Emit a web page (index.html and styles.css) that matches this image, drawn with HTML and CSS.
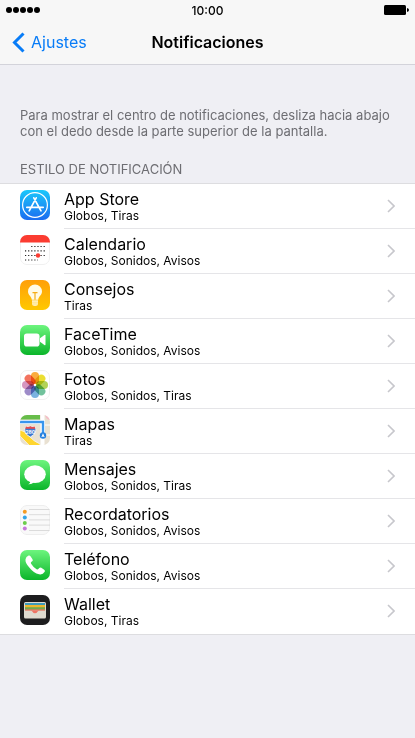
FILE: index.html
```html
<!DOCTYPE html>
<html lang="es">
  <head>
    <meta charset="UTF-8" />
    <meta name="viewport" content="width=device-width, initial-scale=1.0" />
    <title>Notificaciones</title>
    <link rel="stylesheet" href="styles.css">
  </head>
  <body>
    <header class="header">
      <div class="status-bar">
        <div class="signal"><i></i><i></i><i></i><i></i><i></i></div>
        <time class="clock">10:00</time>
        <svg class="battery" width="25" height="10" viewBox="0 0 25 10">
          <rect width="22" height="10" rx="1.5" />
          <path d="M23 3q2 .3 2 2t-2 2z" />
        </svg>
      </div>
      <nav class="nav-bar">
        <a class="back" href="#">
          <svg width="13" height="21" viewBox="0 0 13 21"><path d="M11.5 1.5 2.5 10.5l9 9" /></svg>
          Ajustes
        </a>
        <h1>Notificaciones</h1>
      </nav>
    </header>

    <main>
      <p class="intro">Para mostrar el centro de notificaciones, desliza hacia abajo con el dedo desde la parte superior de la pantalla.</p>
      <h2>ESTILO DE NOTIFICACIÓN</h2>

      <ul class="app-list">
        <li>
          <a class="app" href="#">
            <svg class="icon" viewBox="0 0 30 30">
              <defs>
                <linearGradient id="blue" x2="0" y2="1"><stop stop-color="#1bc8fb" /><stop offset="1" stop-color="#1b6cf0" /></linearGradient>
                <linearGradient id="green" x2="0" y2="1"><stop stop-color="#6df57e" /><stop offset="1" stop-color="#0bb52a" /></linearGradient>
                <linearGradient id="orange" x2="0" y2="1"><stop stop-color="#ff9f0a" /><stop offset="1" stop-color="#ffc800" /></linearGradient>
              </defs>
              <rect width="30" height="30" rx="7" fill="url(#blue)" />
              <g fill="none" stroke="#fff">
                <circle cx="15" cy="15" r="12.4" stroke-width="1.2" />
                <path d="M16.2 7.8 9.2 20.8M13.8 7.800l7.200 13M6.800 17.300h16.400" stroke-width="1.7" stroke-linecap="round" />
              </g>
            </svg>
            <span class="row">
              <span class="text"><span class="name">App Store</span><span class="styles">Globos, Tiras</span></span>
              <svg class="chevron" viewBox="0 0 8 14"><path d="M1 1l6 6-6 6" /></svg>
            </span>
          </a>
        </li>
        <li>
          <a class="app" href="#">
            <svg class="icon" viewBox="0 0 30 30">
              <rect x=".5" y=".5" width="29" height="29" rx="6.5" fill="#fff" stroke="#f0f0f0" />
              <path d="M0 7a7 7 0 0 1 7-7h16a7 7 0 0 1 7 7v.5H0z" fill="#fb3c31" />
              <g stroke="#222" stroke-width="1.2" stroke-dasharray="1.2 1.9">
                <path d="M11.2 11.500h14M5 15.800h20M5 20.500h20M5 25h13" />
              </g>
              <circle cx="18" cy="20.500" r="2.200" fill="#fb3c31" />
            </svg>
            <span class="row">
              <span class="text"><span class="name">Calendario</span><span class="styles">Globos, Sonidos, Avisos</span></span>
              <svg class="chevron" viewBox="0 0 8 14"><path d="M1 1l6 6-6 6" /></svg>
            </span>
          </a>
        </li>
        <li>
          <a class="app" href="#">
            <svg class="icon" viewBox="0 0 30 30">
              <rect width="30" height="30" rx="7" fill="url(#orange)" />
              <path d="M11.800 19.800C11.800 16.500 8 15.200 8 11.500a7 7 0 0 1 14 0c0 3.700-3.800 5-3.800 8.300z" fill="#fffbe8" />
              <path d="M12 20.300h6v3.500q0 2.200-3 2.200t-3-2.200z" fill="#fff0bd" />
              <path d="M12.500 12.700h5M15 12.700v7" fill="none" stroke="#f5ad17" stroke-width="1.200" />
              <path d="M12 22.300h6M12 24h6" stroke="#ffd95c" stroke-width=".5" />
            </svg>
            <span class="row">
              <span class="text"><span class="name">Consejos</span><span class="styles">Tiras</span></span>
              <svg class="chevron" viewBox="0 0 8 14"><path d="M1 1l6 6-6 6" /></svg>
            </span>
          </a>
        </li>
        <li>
          <a class="app" href="#">
            <svg class="icon" viewBox="0 0 30 30">
              <rect width="30" height="30" rx="7" fill="url(#green)" />
              <rect x="4" y="8.500" width="15.500" height="13" rx="2.800" fill="#fff" />
              <path d="M20 13.300 24.400 10q1.100-.7 1.100.5v9q0 1.200-1.100.5L20 16.700z" fill="#fff" />
            </svg>
            <span class="row">
              <span class="text"><span class="name">FaceTime</span><span class="styles">Globos, Sonidos, Avisos</span></span>
              <svg class="chevron" viewBox="0 0 8 14"><path d="M1 1l6 6-6 6" /></svg>
            </span>
          </a>
        </li>
        <li>
          <a class="app" href="#">
            <svg class="icon" viewBox="0 0 30 30">
              <rect x=".5" y=".5" width="29" height="29" rx="6.500" fill="#fff" stroke="#f0f0f0" />
              <g class="petals">
                <rect x="11" y="2" width="8" height="12" rx="4" fill="#f99d1c" />
                <rect x="11" y="2" width="8" height="12" rx="4" fill="#e8d80c" transform="rotate(45 15 15)" />
                <rect x="11" y="2" width="8" height="12" rx="4" fill="#a4ca39" transform="rotate(90 15 15)" />
                <rect x="11" y="2" width="8" height="12" rx="4" fill="#58b78b" transform="rotate(135 15 15)" />
                <rect x="11" y="2" width="8" height="12" rx="4" fill="#62a5db" transform="rotate(180 15 15)" />
                <rect x="11" y="2" width="8" height="12" rx="4" fill="#8c77bf" transform="rotate(225 15 15)" />
                <rect x="11" y="2" width="8" height="12" rx="4" fill="#cf83b4" transform="rotate(270 15 15)" />
                <rect x="11" y="2" width="8" height="12" rx="4" fill="#f05a43" transform="rotate(315 15 15)" />
              </g>
              <circle cx="15" cy="15" r="1" fill="#fff" />
            </svg>
            <span class="row">
              <span class="text"><span class="name">Fotos</span><span class="styles">Globos, Sonidos, Tiras</span></span>
              <svg class="chevron" viewBox="0 0 8 14"><path d="M1 1l6 6-6 6" /></svg>
            </span>
          </a>
        </li>
        <li>
          <a class="app" href="#">
            <svg class="icon" viewBox="0 0 30 30">
              <clipPath id="tile"><rect width="30" height="30" rx="7" /></clipPath>
              <g clip-path="url(#tile)">
                <rect width="30" height="30" fill="#e9e1d2" />
                <path d="M0 0h20v4.500H0z" fill="#67bd4a" />
                <path d="M25 0h5v5q-4-.5-5-5z" fill="#f5bcc8" />
                <path d="M20.500 0h4v30h-4z" fill="#fff" />
                <path d="M24.500 10h6M24.500 20h6" stroke="#fff" />
                <path d="M0 15q5 1 9 6t11 8v3h-9L0 21z" fill="#ffd52e" stroke="#fff" stroke-width=".6" />
                <path d="M0 7h23v13" fill="none" stroke="#fff" stroke-width="4" />
                <path d="M0 7h23v13" fill="none" stroke="#3995ed" stroke-width="2.400" />
                <circle cx="23" cy="20.500" r="3.200" fill="#2580df" />
                <path d="m23 18.300 1.700 4-1.700-.8-1.700.8z" fill="#fff" />
                <path d="M5.800 11.500q2.200 1 4.500-.3 2.300 1.300 4.500.3 3.500 6.500-4.500 10.500-8-4-4.500-10.500z" fill="#3e78cf" stroke="#fff" stroke-width=".8" />
                <path d="M6 11.500q2.100 1 4.300-.3 2.200 1.300 4.300.3l.9 2.300H5.100z" fill="#e94b4c" />
                <text class="route" x="10.300" y="18.500" text-anchor="middle">280</text>
              </g>
            </svg>
            <span class="row">
              <span class="text"><span class="name">Mapas</span><span class="styles">Tiras</span></span>
              <svg class="chevron" viewBox="0 0 8 14"><path d="M1 1l6 6-6 6" /></svg>
            </span>
          </a>
        </li>
        <li>
          <a class="app" href="#">
            <svg class="icon" viewBox="0 0 30 30">
              <rect width="30" height="30" rx="7" fill="url(#green)" />
              <ellipse cx="15" cy="14.200" rx="10.800" ry="8.900" fill="#fff" />
              <path d="M10.500 20.500q.2 2.400-2.200 3.700 3.500.2 5.700-2z" fill="#fff" />
            </svg>
            <span class="row">
              <span class="text"><span class="name">Mensajes</span><span class="styles">Globos, Sonidos, Tiras</span></span>
              <svg class="chevron" viewBox="0 0 8 14"><path d="M1 1l6 6-6 6" /></svg>
            </span>
          </a>
        </li>
        <li>
          <a class="app" href="#">
            <svg class="icon" viewBox="0 0 30 30">
              <rect x=".5" y=".5" width="29" height="29" rx="6.500" fill="#f9f9f9" stroke="#eee" />
              <path d="M9 4.500h20.500M9 9.700h21M9 14.900h21M9 20.100h21M9 25.500h20.500" stroke="#d3d3d3" stroke-width=".8" />
              <circle cx="4.800" cy="6.800" r="2" fill="#f59b23" />
              <circle cx="4.800" cy="12.400" r="2" fill="#32a4e8" />
              <circle cx="4.800" cy="17.900" r="2" fill="#6ccd4b" />
              <circle cx="4.800" cy="23.400" r="2" fill="#c777da" />
            </svg>
            <span class="row">
              <span class="text"><span class="name">Recordatorios</span><span class="styles">Globos, Sonidos, Avisos</span></span>
              <svg class="chevron" viewBox="0 0 8 14"><path d="M1 1l6 6-6 6" /></svg>
            </span>
          </a>
        </li>
        <li>
          <a class="app" href="#">
            <svg class="icon" viewBox="0 0 30 30">
              <rect width="30" height="30" rx="7" fill="url(#green)" />
              <path d="M8.600 5.600q1-.6 1.900.6l2 3q.8 1.300-.3 2.100l-1 .8q-.7.700-.1 1.700 2.200 3.500 5.500 5.500 1 .6 1.700-.2l.9-1.100q.9-1 2.100-.2l2.900 2q1.200.9.500 2-2.100 3.300-5.600 2.500-5.500-1.500-9.800-6.900Q5 13.200 5.500 9.300q.4-2.400 3.100-3.700z" fill="#fff" />
            </svg>
            <span class="row">
              <span class="text"><span class="name">Teléfono</span><span class="styles">Globos, Sonidos, Avisos</span></span>
              <svg class="chevron" viewBox="0 0 8 14"><path d="M1 1l6 6-6 6" /></svg>
            </span>
          </a>
        </li>
        <li>
          <a class="app" href="#">
            <svg class="icon" viewBox="0 0 30 30">
              <rect width="30" height="30" rx="7" fill="#1d1d1f" />
              <rect x="4" y="7" width="22" height="16.500" rx="1.500" fill="#dedad0" />
              <path d="M5 8h20v3H5z" fill="#3d9abb" />
              <path d="M5 10h20v3H5z" fill="#eeb72e" />
              <path d="M5 12.200h20v3H5z" fill="#73aa4e" />
              <path d="M5 14.400h20v1.200H5z" fill="#ef7365" />
              <path d="M10.500 15.400h9q-1 0-1.800 1-1.200 1.900-2.700 1.900t-2.700-1.900q-.8-1-1.800-1z" fill="#ef7365" />
            </svg>
            <span class="row">
              <span class="text"><span class="name">Wallet</span><span class="styles">Globos, Tiras</span></span>
              <svg class="chevron" viewBox="0 0 8 14"><path d="M1 1l6 6-6 6" /></svg>
            </span>
          </a>
        </li>
      </ul>
    </main>
  </body>
</html>
```
FILE: styles.css
```css
* {
  box-sizing: border-box;
  margin: 0;
  padding: 0;
}

body {
  min-height: 100vh;
  background-color: #efeff4;
  color: #000;
  font-family: Inter, "Liberation Sans", sans-serif;
}

a {
  color: inherit;
  text-decoration: none;
}

.header {
  background-color: #f7f7f7;
  border-bottom: 1px solid #d3d3da;
}

.status-bar {
  display: grid;
  grid-template-columns: 1fr auto 1fr;
  align-items: center;
  height: 20px;
  padding: 0 6px;
}

.signal {
  display: flex;
  gap: 1px;
}

.signal i {
  width: 6px;
  height: 6px;
  border-radius: 50%;
  background-color: #000;
}

.clock {
  font-size: 12px;
  font-weight: 500;
}

.battery {
  justify-self: end;
}

.nav-bar {
  display: grid;
  grid-template-columns: 1fr auto 1fr;
  align-items: center;
  height: 44px;
  padding: 0 12px;
}

.back {
  display: flex;
  align-items: center;
  gap: 6px;
  color: #087cf7;
  font-size: 16px;
}

.back path {
  fill: none;
  stroke: currentColor;
  stroke-width: 3;
}

h1 {
  font-size: 16px;
  font-weight: 600;
}

.intro {
  padding: 42px 20px 0;
  color: #6d6d72;
  font-size: 13px;
  line-height: 16px;
}

h2 {
  padding: 22px 20px 6px;
  color: #6d6d72;
  font-size: 13px;
  font-weight: 400;
  line-height: 16px;
}

.app-list {
  background-color: #fff;
  border-top: 1px solid #dddde0;
  border-bottom: 1px solid #dddde0;
  list-style: none;
}

.app {
  display: flex;
  align-items: flex-start;
  gap: 14px;
  padding-left: 20px;
}

.icon {
  flex: none;
  width: 30px;
  height: 30px;
  margin-top: 6px;
}

.row {
  display: flex;
  flex: 1;
  align-items: center;
  justify-content: space-between;
  padding: 5px 20px 5px 0;
  border-bottom: 1px solid #e5e5e8;
}

li:last-child .row {
  border-bottom-color: transparent;
}

.text {
  display: flex;
  flex-direction: column;
}

.name {
  font-size: 16px;
  line-height: 20px;
}

.styles {
  font-size: 12px;
  line-height: 14px;
}

.chevron {
  width: 8px;
  height: 14px;
  fill: none;
  stroke: #c7c7cc;
  stroke-width: 1.6;
}

.petals rect {
  mix-blend-mode: multiply;
  opacity: 0.85;
}

.route {
  fill: #fff;
  font-size: 5px;
  font-weight: 700;
}
```
